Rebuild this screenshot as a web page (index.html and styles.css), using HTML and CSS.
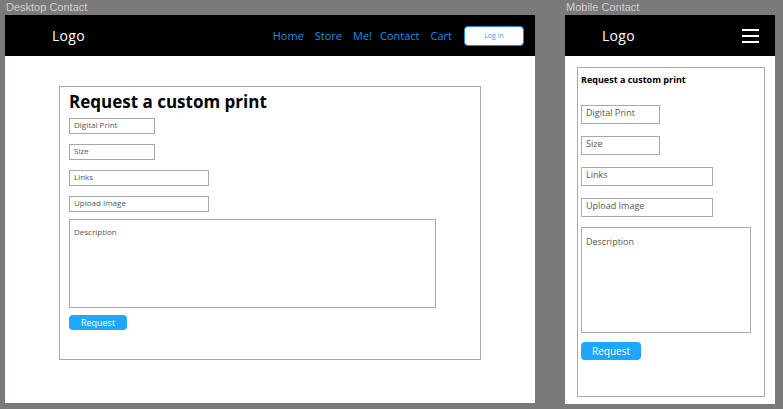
FILE: index.html
```html
<!DOCTYPE html>
<html>
<head>
<meta charset="utf-8">
<link rel="stylesheet" href="styles.css">
</head>
<body>
<div class="canvas">
  <section class="board desktop">
    <div class="board-label">Desktop Contact</div>
    <div class="frame">
      <header class="topbar">
        <div class="logo">Logo</div>
        <nav class="nav">
          <a>Home</a><a>Store</a><a>Me!</a><a class="contact">Contact</a><a>Cart</a>
          <button class="login">Log in</button>
        </nav>
      </header>
      <main class="content">
        <div class="card">
          <h1 class="title">Request a custom print</h1>
          <div class="field short">Digital Print</div>
          <div class="field short">Size</div>
          <div class="field medium">Links</div>
          <div class="field medium">Upload Image</div>
          <div class="field area">Description</div>
          <button class="submit">Request</button>
        </div>
      </main>
    </div>
  </section>
  <section class="board mobile">
    <div class="board-label">Mobile Contact</div>
    <div class="frame">
      <header class="topbar">
        <div class="logo">Logo</div>
        <div class="burger"><span></span><span></span><span></span></div>
      </header>
      <main class="content">
        <div class="card">
          <h1 class="title">Request a custom print</h1>
          <div class="field short">Digital Print</div>
          <div class="field short">Size</div>
          <div class="field medium">Links</div>
          <div class="field medium">Upload Image</div>
          <div class="field area">Description</div>
          <button class="submit">Request</button>
        </div>
      </main>
    </div>
  </section>
</div>
</body>
</html>
```
FILE: styles.css
```css
* { box-sizing: border-box; }
html, body { margin: 0; padding: 0; }
body {
  background: #7b7979;
  font-family: "Open Sans", "Liberation Sans", sans-serif;
  width: 783px;
  height: 409px;
  overflow: hidden;
}
.canvas {
  display: flex;
  gap: 30px;
  padding-left: 5px;
}
.board-label {
  height: 15px;
  font-family: "Liberation Sans", Arial, sans-serif;
  font-size: 11px;
  line-height: 15px;
  color: #cfcfcf;
  padding-left: 1px;
}
.frame {
  background: #fff;
  display: flex;
  flex-direction: column;
}
.desktop .frame { width: 530px; height: 388px; }
.mobile .frame { width: 210px; height: 389px; }

.topbar {
  background: #000;
  height: 41px;
  flex: none;
  display: flex;
  align-items: center;
  justify-content: space-between;
}
.logo {
  color: #fff;
  font-size: 14px;
  letter-spacing: 0.3px;
}
.desktop .logo { padding-left: 47px; }
.mobile .logo { padding-left: 37px; }

.nav {
  display: flex;
  align-items: center;
  padding-right: 11px;
}
.nav a {
  color: #1f8ee6;
  font-size: 11px;
  margin-right: 11px;
}
.nav a.contact { margin-left: -3px; }
.login {
  margin-left: 1px;
  width: 60px;
  height: 20px;
  background: #fff;
  border: 1px solid #1f8ee6;
  border-radius: 4px;
  color: #3c9be8;
  font-family: inherit;
  font-size: 7px;
  padding: 0;
}

.burger {
  width: 17px;
  margin-right: 16px;
  display: flex;
  flex-direction: column;
  gap: 4px;
}
.burger span {
  display: block;
  height: 2px;
  background: #fff;
}

.content { flex: 1; }
.desktop .content { padding: 30px 0 0 54px; }
.mobile .content { padding: 11px 0 0 12px; }

.card {
  border: 1px solid #a8a8a8;
  display: flex;
  flex-direction: column;
  align-items: flex-start;
}
.desktop .card { width: 422px; height: 274px; padding: 3px 9px 0 9px; }
.mobile .card { width: 188px; height: 330px; padding: 5px 3px 0 3px; }

.title {
  margin: 0;
  font-weight: 700;
  color: #000;
}
.desktop .title { font-size: 17px; line-height: 24px; margin-bottom: 4px; }
.mobile .title { font-size: 9px; line-height: 14px; margin-bottom: 18px; }

.field {
  border: 1px solid #a8a8a8;
  color: #555;
  background: #fff;
}
.desktop .field { font-size: 8px; line-height: 12px; padding: 0 4px; margin-bottom: 10px; height: 16px; }
.desktop .field.short { width: 86px; }
.desktop .field.medium { width: 140px; }
.desktop .field.area { width: 367px; height: 89px; padding-top: 6px; margin-top: -3px; margin-bottom: 7px; }

.mobile .field { font-size: 9px; line-height: 13px; padding: 0 4px; margin-bottom: 12px; height: 19px; }
.mobile .field.short { width: 79px; }
.mobile .field.medium { width: 132px; }
.mobile .field.area { width: 170px; height: 106px; padding-top: 7px; margin-top: -2px; margin-bottom: 9px; }

.submit {
  background: #1ea7fd;
  color: #fff;
  border: none;
  border-radius: 4px;
  font-family: inherit;
  padding: 0;
}
.desktop .submit { width: 58px; height: 15px; font-size: 9px; }
.mobile .submit { width: 60px; height: 18px; font-size: 10px; }
```
